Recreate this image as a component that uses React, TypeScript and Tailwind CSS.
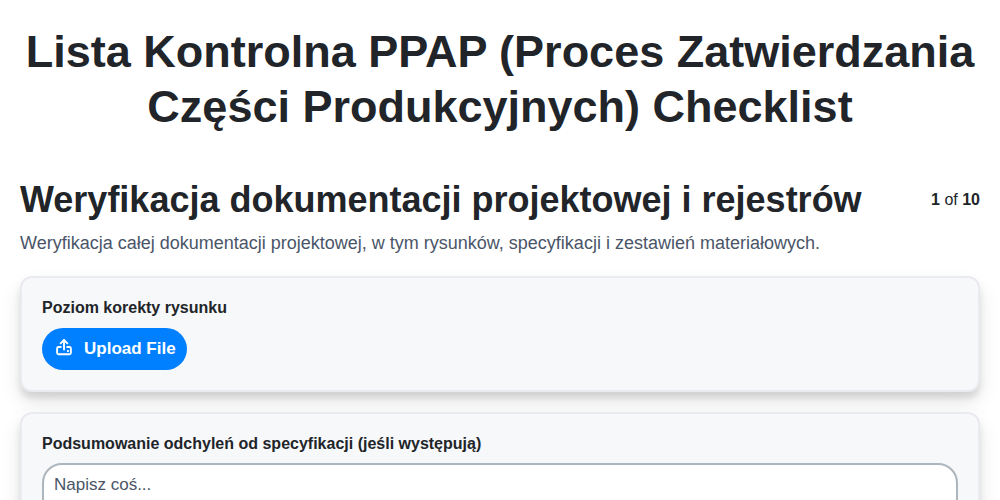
import React from 'react';

const UploadIcon = () => (
  <svg width="16" height="20" viewBox="0 0 16 20" fill="none" stroke="currentColor" strokeWidth="1.9" strokeLinecap="round" strokeLinejoin="round">
    <path d="M8 10.5V1.2" />
    <path d="M4.6 4.4L8 1L11.4 4.4" />
    <path d="M4.8 8H2.6C1.7 8 1.1 8.6 1.1 9.5V13.8C1.1 14.7 1.7 15.3 2.6 15.3H13.4C14.3 15.3 14.9 14.7 14.9 13.8V9.5C14.9 8.6 14.3 8 13.4 8H11.2" />
    <path d="M11.8 12H12.2" />
  </svg>
);

const App: React.FC = () => {
  return (
    <div className="h-[500px] overflow-hidden bg-white px-5 font-['Liberation_Sans',Arial,sans-serif] text-[#212529]">
      <h1 className="pt-6 pb-11 text-center text-[45px] font-bold leading-[55px]">
        Lista Kontrolna PPAP (Proces Zatwierdzania Części Produkcyjnych) Checklist
      </h1>

      <div className="flex items-start justify-between">
        <h2 className="text-[36px] font-bold leading-[44px]">Weryfikacja dokumentacji projektowej i rejestrów</h2>
        <div className="pt-3 text-base leading-[20px]">
          <b>1</b> of <b>10</b>
        </div>
      </div>
      <p className="mt-2 text-[18px] leading-[26px] text-[#4a5568]">
        Weryfikacja całej dokumentacji projektowej, w tym rysunków, specyfikacji i zestawień materiałowych.
      </p>

      <div className="mt-5 rounded-xl border-2 border-[#e9ebf0] bg-[#f7f8fa] p-5 shadow-[0_10px_20px_rgba(0,0,0,0.1),0_6px_6px_rgba(0,0,0,0.1)]">
        <div className="text-base font-bold leading-5">Poziom korekty rysunku</div>
        <button className="mt-[10px] flex h-[42px] items-center gap-3 rounded-full bg-[#007fff] pl-[14px] pr-[11px] text-[17px] font-bold text-white">
          <UploadIcon />
          Upload File
        </button>
      </div>

      <div className="mt-5 rounded-xl border-2 border-[#e9ebf0] bg-[#f7f8fa] p-5 shadow-[0_10px_20px_rgba(0,0,0,0.1),0_6px_6px_rgba(0,0,0,0.1)]">
        <div className="text-base font-bold leading-5">Podsumowanie odchyleń od specyfikacji (jeśli występują)</div>
        <textarea
          className="mt-[9px] block h-[120px] w-full resize-none rounded-[20px] border-2 border-[#adb5bd] bg-white px-[10px] py-[10px] text-[17px] leading-[20px] outline-none placeholder:text-[#4a5568]"
          placeholder="Napisz coś..."
        />
      </div>
    </div>
  );
};

export default App;
